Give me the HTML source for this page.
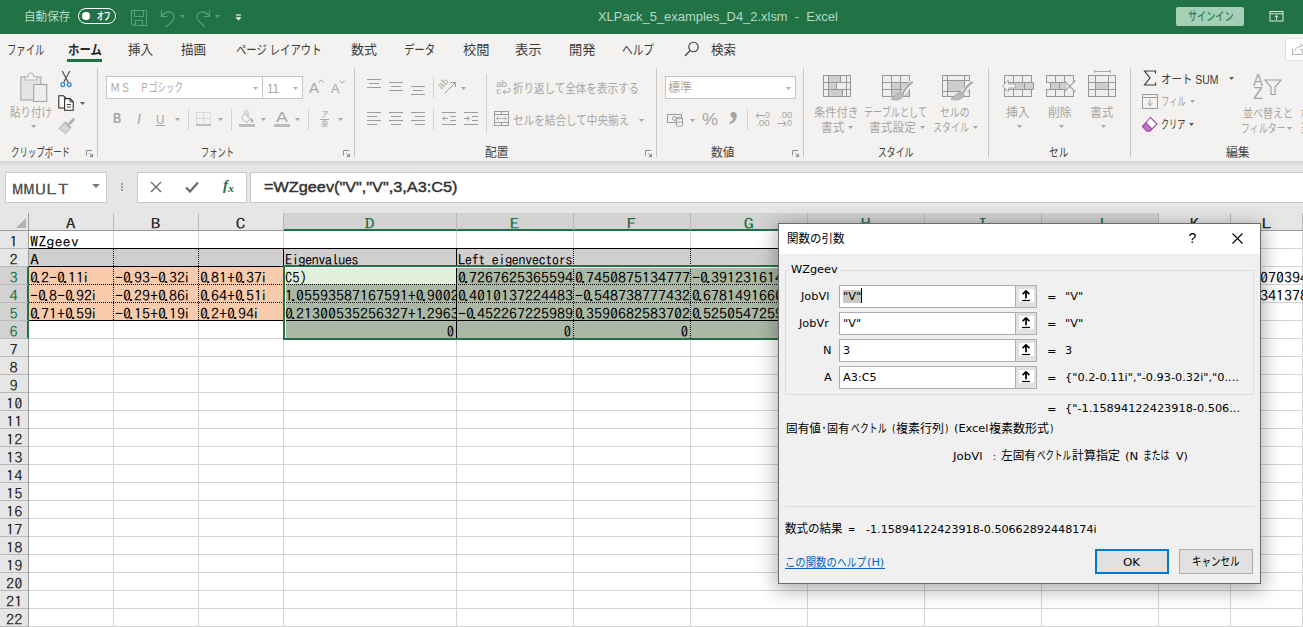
<!DOCTYPE html>
<html lang="ja">
<head>
<meta charset="utf-8">
<title>XLPack_5_examples_D4_2.xlsm - Excel</title>
<style>
*{box-sizing:border-box;margin:0;padding:0}
html,body{width:1303px;height:627px;overflow:hidden;background:#fff}
body{position:relative;font-family:"Liberation Sans","Noto Sans CJK JP",sans-serif;font-size:12px;color:#262626}
.abs{position:absolute}
.t{position:absolute;white-space:nowrap;line-height:1}
#title{left:0;top:0;width:1303px;height:33px;background:#217346;color:#fff}
#tabs{left:0;top:33px;width:1303px;height:32px;background:#f3f2f1}
#ribbon{left:0;top:65px;width:1303px;height:96px;background:#f3f2f1}
#fbar{left:0;top:161px;width:1303px;height:52px;background:#e6e6e6}
#fshadow{left:0;top:161px;width:1303px;height:6px;background:linear-gradient(#d3d3d3,#e6e6e6)}
#sheet{left:0;top:0;width:1303px;height:627px}
.cell,.ch,.rh{font-family:"IPAGothic","Noto Sans CJK JP",sans-serif;font-size:14.67px}
.ch{text-align:center}
.rh{left:0;width:28px;text-align:center}
.cell{color:#000}
.dl{font-family:"DejaVu Sans","Noto Sans CJK JP",sans-serif;font-size:11.3px;color:#000}
.dl .j,.j{font-size:12px;display:inline-block;transform-origin:0 50%}
.inp{position:absolute;left:60px;width:198px;height:23px;background:#fff;border:1px solid #abadb3;font-family:"DejaVu Sans",sans-serif;font-size:11.3px;color:#000;line-height:21px;padding-left:3px;white-space:nowrap}
.inp .sel{background:#c8c8c8}
.inp .caret{display:inline-block;width:1px;height:15px;background:#000;vertical-align:-3px}
.btn{width:74px;height:25px;background:#e1e1e1;text-align:center;font-size:12px;color:#000}
.btn span{position:absolute;left:0;right:0;line-height:1}
.inp i{position:absolute;right:0;top:0;width:21px;height:21px;background:#e1e1e1;border-left:1px solid #abadb3}
.inp i::before{content:"";position:absolute;left:3px;top:3px;width:15px;height:13px;background:#fff}
.inp i svg{position:absolute;left:5px;top:4px}
.cell .d{font-style:normal;margin:0 -2.3px}
.cell .d2{font-style:normal;margin:0 -2.2px 0 -2px}
</style>
</head>
<body>
<div id="title" class="abs" style="height:34px"></div>
<div class="t" style="left:23.5px;top:10.5px;font-size:12px;color:#b7d8c5;transform:scaleX(0.968);transform-origin:0 0;">自動保存</div>
<div class="abs" style="left:78px;top:8px;width:38px;height:16px;border:1.4px solid #fff;border-radius:8px"></div>
<div class="abs" style="left:82px;top:12.2px;width:7.6px;height:7.6px;border-radius:50%;background:#fff"></div>
<div class="t" style="left:96.5px;top:12.3px;font-size:10px;color:#fff;font-weight:bold;transform:scaleX(0.675);transform-origin:0 0;">オフ</div>
<svg class="abs" style="left:130px;top:9px" width="18" height="18" viewBox="0 0 18 18" fill="none" stroke="#5c9d78" stroke-width="1.1"><path d="M1.5 1.5H16.5V16.5H3.5L1.5 14.5Z"/><path d="M4.5 1.5V7.5H13.5V1.5"/><path d="M5.5 16.5V11.5H12.5V16.5"/></svg>
<svg class="abs" style="left:159px;top:8px" width="18" height="20" viewBox="0 0 18 20" fill="none" stroke="#5c9d78" stroke-width="1.2"><path d="M2.5 2.5V8.5H8.5"/><path d="M2.8 8.2C5 4.5 9 2.8 12.5 4.5C16 6.5 16 10.5 13 13.5L7 19"/></svg>
<svg class="abs" style="left:180px;top:15px" width="5" height="3"><path d="M0 0H5L2.5 3Z" fill="#5c9d78"/></svg>
<svg class="abs" style="left:194px;top:8px" width="18" height="20" viewBox="0 0 18 20" fill="none" stroke="#5c9d78" stroke-width="1.2"><path d="M15.5 2.5V8.5H9.5"/><path d="M15.2 8.2C13 4.5 9 2.8 5.5 4.5C2 6.5 2 10.5 5 13.5L11 19"/></svg>
<svg class="abs" style="left:215px;top:15px" width="5" height="3"><path d="M0 0H5L2.5 3Z" fill="#5c9d78"/></svg>
<svg class="abs" style="left:234.5px;top:13.5px" width="7" height="7"><path d="M1 1H6" stroke="#fff" stroke-width="1.1"/><path d="M0.5 3.2H6.5L3.5 6.5Z" fill="#fff"/></svg>
<div class="t" style="left:598.0px;top:10.0px;font-size:13px;color:#b7d8c5;transform:scaleX(0.994);transform-origin:0 0;white-space:pre;">XLPack_5_examples_D4_2.xlsm  -  Excel</div>
<div class="abs" style="left:1176px;top:7px;width:68px;height:19px;background:#a4d0b5;border-radius:2px"></div>
<div class="t" style="left:1187.5px;top:11.0px;font-size:12px;color:#35805a;font-weight:500;transform:scaleX(0.758);transform-origin:0 0;">サインイン</div>
<svg class="abs" style="left:1269px;top:10px" width="15" height="12" viewBox="0 0 15 12" fill="none" stroke="#dcebe2" stroke-width="1"><rect x="1" y="1.5" width="13" height="9.5"/><path d="M1 3.8H14"/><path d="M7.5 10V5.5M5.5 7.3L7.5 5.3L9.5 7.3"/></svg>
<div id="tabs" class="abs" style="top:34px;height:31px"></div>
<div class="t" style="left:7.0px;top:43.0px;font-size:13px;color:#3b3b3b;transform:scaleX(0.721);transform-origin:0 0;">ファイル</div>
<div class="t" style="left:67.5px;top:43.0px;font-size:13px;color:#262626;font-weight:bold;transform:scaleX(0.875);transform-origin:0 0;">ホーム</div>
<div class="abs" style="left:67px;top:59px;width:35px;height:3px;background:#217346"></div>
<div class="t" style="left:128.3px;top:43.0px;font-size:13px;color:#3b3b3b;transform:scaleX(0.969);transform-origin:0 0;">挿入</div>
<div class="t" style="left:181.1px;top:43.0px;font-size:13px;color:#3b3b3b;transform:scaleX(0.969);transform-origin:0 0;">描画</div>
<div class="t" style="left:235.8px;top:43.0px;font-size:13px;color:#3b3b3b;transform:scaleX(0.797);transform-origin:0 0;">ページ レイアウト</div>
<div class="t" style="left:351.0px;top:43.0px;font-size:13px;color:#3b3b3b;transform:scaleX(0.999);transform-origin:0 0;">数式</div>
<div class="t" style="left:404.0px;top:43.0px;font-size:13px;color:#3b3b3b;transform:scaleX(0.795);transform-origin:0 0;">データ</div>
<div class="t" style="left:462.5px;top:43.0px;font-size:13px;color:#3b3b3b;transform:scaleX(1.019);transform-origin:0 0;">校閲</div>
<div class="t" style="left:515.0px;top:43.0px;font-size:13px;color:#3b3b3b;transform:scaleX(1.019);transform-origin:0 0;">表示</div>
<div class="t" style="left:568.5px;top:43.0px;font-size:13px;color:#3b3b3b;transform:scaleX(1.019);transform-origin:0 0;">開発</div>
<div class="t" style="left:621.5px;top:43.0px;font-size:13px;color:#3b3b3b;transform:scaleX(0.820);transform-origin:0 0;">ヘルプ</div>
<svg class="abs" style="left:684px;top:41px" width="16" height="16" viewBox="0 0 16 16" fill="none" stroke="#3b3b3b" stroke-width="1.1"><circle cx="9.5" cy="6" r="4.7"/><path d="M6.2 9.5L1 15"/></svg>
<div class="t" style="left:711.0px;top:43.0px;font-size:13px;color:#3b3b3b;transform:scaleX(0.961);transform-origin:0 0;">検索</div>
<div class="abs" style="left:1285px;top:38px;width:30px;height:23px;background:#fff;border:1px solid #e1dfdd;border-radius:3px"></div>
<svg class="abs" style="left:1291px;top:43px" width="14" height="13" viewBox="0 0 14 13" fill="none" stroke="#b4b2b0" stroke-width="1"><path d="M1.5 4.5V11.5H11.5V8"/><path d="M4 8C4 5 7 3.5 10 3.5V1L13.5 4.5L10 8V5.5"/></svg><div id="ribbon" class="abs"></div>
<div class="abs" style="left:97px;top:68px;width:1px;height:89px;background:#c8c6c4"></div>
<div class="abs" style="left:354px;top:68px;width:1px;height:89px;background:#c8c6c4"></div>
<div class="abs" style="left:656px;top:68px;width:1px;height:89px;background:#c8c6c4"></div>
<div class="abs" style="left:803px;top:68px;width:1px;height:89px;background:#c8c6c4"></div>
<div class="abs" style="left:988px;top:68px;width:1px;height:89px;background:#c8c6c4"></div>
<div class="abs" style="left:1130px;top:68px;width:1px;height:89px;background:#c8c6c4"></div>
<svg class="abs" style="left:19px;top:71px" width="29" height="32" viewBox="0 0 29 32" fill="none" stroke="#b3b1af" stroke-width="1" ><rect x="1.8" y="6" width="20" height="23" fill="#e6e4e2" stroke="#bdbbb9" stroke-width="1.6"/><path d="M6 9V5.5H9.2C9.2 0.8 14.6 0.8 14.6 5.5H17.8V9Z" fill="#f3f2f1" stroke="#bdbbb9" stroke-width="1.2"/><rect x="14.7" y="13.5" width="13" height="17" fill="#efeeed" stroke="#a6a4a2" stroke-width="1.1"/></svg>
<div class="t" style="left:10.0px;top:107.0px;font-size:12px;color:#a7a5a3;transform:scaleX(0.875);transform-origin:0 0;">貼り付け</div>
<svg class="abs" style="left:31.0px;top:125.0px" width="5" height="3"><path d="M0 0H5L2.5 3Z" fill="#a7a5a3"/></svg>
<svg class="abs" style="left:60px;top:70px" width="12" height="18" viewBox="0 0 12 18" fill="none" stroke="#505050" stroke-width="1.1" ><path d="M2.2 1L8.3 12.5M9.8 1L3.7 12.5" stroke="#505050" stroke-width="1.2"/><circle cx="2.8" cy="14.6" r="1.9" stroke="#2b88d8" stroke-width="1.3"/><circle cx="9.2" cy="14.6" r="1.9" stroke="#2b88d8" stroke-width="1.3"/></svg>
<svg class="abs" style="left:58px;top:95px" width="17" height="16" viewBox="0 0 17 16" fill="none" stroke="#262626" stroke-width="1.05" ><path d="M0.8 0.8H5.5L7.5 2.8V13H0.8Z" fill="#fafafa"/><path d="M6.6 3.6H12L15.2 6.8V15.2H6.6Z" fill="#fff"/><path d="M12 3.6V6.8H15.2" stroke-width="0.9"/><path d="M8.8 9.5H13M8.8 12H13" stroke-width="0.9"/></svg>
<svg class="abs" style="left:80.0px;top:101.8px" width="5" height="3"><path d="M0 0H5L2.5 3Z" fill="#605e5c"/></svg>
<svg class="abs" style="left:58px;top:118px" width="17" height="16" viewBox="0 0 17 16" fill="none" stroke="#b3b1af" stroke-width="1" ><path d="M10.5 5.5L14.8 1.2C15.6 0.4 16.6 1.4 15.8 2.2L11.5 6.5" stroke-width="1.6" stroke="#b0aeac"/><path d="M7 3.8L13 9.8" stroke-width="1.6" stroke="#b0aeac"/><path d="M6.5 4.5L1 10.5L7.5 15.5L12.3 10.3Z" fill="#d9d7d5" stroke="#b0aeac"/></svg>
<div class="t" style="left:10.6px;top:147.0px;font-size:12px;color:#444;transform:scaleX(0.703);transform-origin:0 0;">クリップボード</div>
<svg class="abs" style="left:86px;top:150px" width="8" height="8" viewBox="0 0 8 8" fill="none" stroke="#8e8c8a" stroke-width="1" ><path d="M0.5 5.5V0.5H6"/><path d="M3.3 3.3L6 6" /><path d="M7 3.2V7H3.2Z" fill="#8e8c8a" stroke="none"/></svg>
<div class="abs" style="left:106px;top:76px;width:157px;height:23px;background:#fff;border:1px solid #c8c6c4"></div>
<div class="abs" style="left:263px;top:76px;width:40px;height:23px;background:#fff;border:1px solid #c8c6c4;border-left:none"></div>
<div class="t" style="left:110.4px;top:82.0px;font-size:12px;color:#a7a5a3;transform:scaleX(0.858);transform-origin:0 0;">ＭＳ</div>
<div class="t" style="left:140.0px;top:82.0px;font-size:12px;color:#a7a5a3;transform:scaleX(0.732);transform-origin:0 0;">Ｐ</div>
<div class="t" style="left:148.9px;top:82.0px;font-size:12px;color:#a7a5a3;transform:scaleX(0.710);transform-origin:0 0;">ゴシック</div>
<svg class="abs" style="left:253.0px;top:86.5px" width="5" height="3"><path d="M0 0H5L2.5 3Z" fill="#b5b3b1"/></svg>
<div class="t" style="left:266.5px;top:82.0px;font-size:13px;color:#a7a5a3;transform:scaleX(0.896);transform-origin:0 0;">11</div>
<svg class="abs" style="left:292.5px;top:86.5px" width="5" height="3"><path d="M0 0H5L2.5 3Z" fill="#b5b3b1"/></svg>
<div class="t" style="left:309.0px;top:79.5px;font-size:15px;color:#a7a5a3;transform:scaleX(0.998);transform-origin:0 0;">A</div>
<svg class="abs" style="left:318px;top:79px" width="6" height="4" viewBox="0 0 6 4" fill="none" stroke="#a7a5a3" stroke-width="1" ><path d="M0.5 3.5L3 0.8L5.5 3.5"/></svg>
<div class="t" style="left:331.0px;top:81.5px;font-size:13px;color:#a7a5a3;transform:scaleX(0.980);transform-origin:0 0;">A</div>
<svg class="abs" style="left:339px;top:80px" width="6" height="4" viewBox="0 0 6 4" fill="none" stroke="#a7a5a3" stroke-width="1" ><path d="M0.5 0.5L3 3.2L5.5 0.5"/></svg>
<div class="t" style="left:113.2px;top:111.0px;font-size:14.5px;color:#a7a5a3;font-weight:bold;transform:scaleX(0.792);transform-origin:0 0;">B</div>
<div class="t" style="left:137.0px;top:111.5px;font-size:14px;color:#a7a5a3;transform:scaleX(1.028);transform-origin:0 0;font-style:italic;">I</div>
<div class="t" style="left:156.0px;top:112.5px;font-size:13.5px;color:#a7a5a3;transform:scaleX(0.872);transform-origin:0 0;">U</div>
<div class="abs" style="left:155.5px;top:124.5px;width:9.5px;height:1px;background:#a7a5a3"></div>
<svg class="abs" style="left:174.8px;top:118.0px" width="5" height="3"><path d="M0 0H5L2.5 3Z" fill="#a7a5a3"/></svg>
<div class="abs" style="left:188px;top:109px;width:1px;height:21px;background:#d2d0ce"></div>
<svg class="abs" style="left:196px;top:112px" width="15" height="14" viewBox="0 0 15 14" fill="none" stroke="#b3b1af" stroke-width="1" ><path d="M0.5 0.5H14.5M0.5 0.5V12M14.5 0.5V12M7.5 0.5V12M0.5 6.5H14.5" stroke-dasharray="1 1" stroke="#c4c2c0"/><path d="M0 13H15" stroke-width="1.6"/></svg>
<svg class="abs" style="left:217.9px;top:118.0px" width="5" height="3"><path d="M0 0H5L2.5 3Z" fill="#a7a5a3"/></svg>
<div class="abs" style="left:231px;top:109px;width:1px;height:21px;background:#d2d0ce"></div>
<svg class="abs" style="left:239px;top:110px" width="16" height="13" viewBox="0 0 16 13" fill="none" stroke="#b3b1af" stroke-width="1" ><path d="M6 3.5L11.5 9L7 12.5L2.5 8Z"/><path d="M6 3.5V1.5C6 0 9 0 9 1.5V6"/><path d="M12.5 8.5C13.5 10 14.5 11 13.5 12C12.5 12.8 11.5 11.5 12.5 8.5Z" fill="#b3b1af"/></svg>
<div class="abs" style="left:239px;top:123.5px;width:16px;height:3.5px;background:#bdbbb9"></div>
<svg class="abs" style="left:260.9px;top:118.0px" width="5" height="3"><path d="M0 0H5L2.5 3Z" fill="#a7a5a3"/></svg>
<div class="t" style="left:275.8px;top:108.9px;font-size:15px;color:#a7a5a3;transform:scaleX(1.178);transform-origin:0 0;">A</div>
<div class="abs" style="left:273.5px;top:123.5px;width:16px;height:3.5px;background:#bdbbb9"></div>
<svg class="abs" style="left:295.1px;top:118.0px" width="5" height="3"><path d="M0 0H5L2.5 3Z" fill="#a7a5a3"/></svg>
<div class="abs" style="left:308px;top:109px;width:1px;height:21px;background:#d2d0ce"></div>
<div class="t" style="left:320.5px;top:110.5px;font-size:8px;color:#a7a5a3;transform:scaleX(0.938);transform-origin:0 0;">ア</div>
<div class="t" style="left:320.5px;top:120.0px;font-size:8px;color:#a7a5a3;transform:scaleX(0.938);transform-origin:0 0;">亜</div>
<div class="abs" style="left:320px;top:118.7px;width:8.5px;height:1px;background:#a7a5a3"></div>
<svg class="abs" style="left:337.9px;top:118.0px" width="5" height="3"><path d="M0 0H5L2.5 3Z" fill="#a7a5a3"/></svg>
<div class="t" style="left:201.4px;top:147.0px;font-size:12px;color:#444;transform:scaleX(0.685);transform-origin:0 0;">フォント</div>
<svg class="abs" style="left:343px;top:150px" width="8" height="8" viewBox="0 0 8 8" fill="none" stroke="#8e8c8a" stroke-width="1" ><path d="M0.5 5.5V0.5H6"/><path d="M3.3 3.3L6 6" /><path d="M7 3.2V7H3.2Z" fill="#8e8c8a" stroke="none"/></svg>
<svg class="abs" style="left:367px;top:79px" width="14" height="9" viewBox="0 0 14 9" fill="none" stroke="#9f9d9b" stroke-width="1" ><path d="M0 0.5H14"/><path d="M2 4.5H12"/><path d="M0 8.5H14"/></svg>
<svg class="abs" style="left:389px;top:82px" width="14" height="9" viewBox="0 0 14 9" fill="none" stroke="#9f9d9b" stroke-width="1" ><path d="M0 0.5H14"/><path d="M2 4.5H12"/><path d="M0 8.5H14"/></svg>
<svg class="abs" style="left:411px;top:86px" width="14" height="9" viewBox="0 0 14 9" fill="none" stroke="#9f9d9b" stroke-width="1" ><path d="M0 0.5H14"/><path d="M2 4.5H12"/><path d="M0 8.5H14"/></svg>
<div class="abs" style="left:433px;top:77px;width:1px;height:21px;background:#d2d0ce"></div>
<svg class="abs" style="left:438px;top:76px" width="22" height="20" viewBox="0 0 22 20" fill="none" stroke="#9f9d9b" stroke-width="1" ><path d="M6.5 17.5L17.5 6.5M17.5 6.5H13M17.5 6.5V11"/><text x="1.5" y="11.5" font-size="9.5" fill="#a7a5a3" stroke="none" font-family="Liberation Sans" transform="rotate(-45 5 10)">ab</text></svg>
<svg class="abs" style="left:461.0px;top:86.5px" width="5" height="3"><path d="M0 0H5L2.5 3Z" fill="#a7a5a3"/></svg>
<svg class="abs" style="left:367px;top:112px" width="14" height="13" viewBox="0 0 14 13" fill="none" stroke="#9f9d9b" stroke-width="1" ><path d="M0 0.5H14"/><path d="M0 4.5H10"/><path d="M0 8.5H14"/><path d="M0 12.5H10"/></svg>
<svg class="abs" style="left:389px;top:112px" width="14" height="13" viewBox="0 0 14 13" fill="none" stroke="#9f9d9b" stroke-width="1" ><path d="M0 0.5H14"/><path d="M2 4.5H12"/><path d="M0 8.5H14"/><path d="M2 12.5H12"/></svg>
<svg class="abs" style="left:411px;top:112px" width="14" height="13" viewBox="0 0 14 13" fill="none" stroke="#9f9d9b" stroke-width="1" ><path d="M0 0.5H14"/><path d="M4 4.5H14"/><path d="M0 8.5H14"/><path d="M4 12.5H14"/></svg>
<div class="abs" style="left:433px;top:108px;width:1px;height:22px;background:#d2d0ce"></div>
<svg class="abs" style="left:442px;top:112px" width="14" height="13" viewBox="0 0 14 13" fill="none" stroke="#9f9d9b" stroke-width="1" ><path d="M0 0.5H14M8 4.5H14M8 8.5H14M0 12.5H14"/><path d="M6 6.5H0.8M3 4.3L0.8 6.5L3 8.7"/></svg>
<svg class="abs" style="left:464px;top:112px" width="14" height="13" viewBox="0 0 14 13" fill="none" stroke="#9f9d9b" stroke-width="1" ><path d="M0 0.5H14M8 4.5H14M8 8.5H14M0 12.5H14"/><path d="M0 6.5H5.2M3 4.3L5.2 6.5L3 8.7"/></svg>
<div class="abs" style="left:486px;top:74px;width:1px;height:59px;background:#d2d0ce"></div>
<svg class="abs" style="left:496px;top:79px" width="16" height="17" viewBox="0 0 16 17" fill="none" stroke="#9f9d9b" stroke-width="1" ><text x="0.3" y="7.5" font-size="9.5" fill="#a7a5a3" stroke="none" font-family="Liberation Sans">ab</text><text x="0.3" y="15" font-size="9.5" fill="#a7a5a3" stroke="none" font-family="Liberation Sans">c</text><path d="M12.5 9.5C15 9.5 15 13 12.5 13H7M9 11L7 13L9 15"/></svg>
<div class="t" style="left:513.0px;top:82.5px;font-size:12px;color:#a7a5a3;transform:scaleX(0.877);transform-origin:0 0;">折り返して全体を表示する</div>
<svg class="abs" style="left:494px;top:111px" width="16" height="15" viewBox="0 0 16 15" fill="none" stroke="#9f9d9b" stroke-width="1" ><rect x="0.5" y="0.5" width="14" height="14"/><path d="M0.5 3.5H14.5M0.5 11.5H14.5M7.5 0.5V3.5M7.5 11.5V14.5"/><path d="M2.5 7.5H12.5M4.5 5.5L2.5 7.5L4.5 9.5M10.5 5.5L12.5 7.5L10.5 9.5" stroke="#b5b3b1"/></svg>
<div class="t" style="left:513.0px;top:114.5px;font-size:12px;color:#a7a5a3;transform:scaleX(0.883);transform-origin:0 0;">セルを結合して中央揃え</div>
<svg class="abs" style="left:639.0px;top:119.0px" width="5" height="3"><path d="M0 0H5L2.5 3Z" fill="#a7a5a3"/></svg>
<div class="t" style="left:485.0px;top:147.0px;font-size:12px;color:#444;transform:scaleX(0.974);transform-origin:0 0;">配置</div>
<svg class="abs" style="left:645px;top:150px" width="8" height="8" viewBox="0 0 8 8" fill="none" stroke="#8e8c8a" stroke-width="1" ><path d="M0.5 5.5V0.5H6"/><path d="M3.3 3.3L6 6" /><path d="M7 3.2V7H3.2Z" fill="#8e8c8a" stroke="none"/></svg>
<div class="abs" style="left:665px;top:76px;width:131px;height:23px;background:#fff;border:1px solid #c8c6c4"></div>
<div class="t" style="left:667.7px;top:82.0px;font-size:12px;color:#a7a5a3;transform:scaleX(1.004);transform-origin:0 0;">標準</div>
<svg class="abs" style="left:785.8px;top:86.5px" width="5" height="3"><path d="M0 0H5L2.5 3Z" fill="#b5b3b1"/></svg>
<svg class="abs" style="left:667px;top:113px" width="17" height="14" viewBox="0 0 17 14" fill="none" stroke="#9d9b99" stroke-width="1" ><rect x="0.5" y="1.5" width="14" height="8"/><circle cx="7.5" cy="5.5" r="2"/><path d="M9.5 5V12.5C9.5 13.5 15.5 13.5 15.5 12.5V5M9.5 5C9.5 4 15.5 4 15.5 5C15.5 6 9.5 6 9.5 5M9.5 8.5C9.5 9.5 15.5 9.5 15.5 8.5" fill="#f3f2f1"/></svg>
<svg class="abs" style="left:689.8px;top:118.5px" width="5" height="3"><path d="M0 0H5L2.5 3Z" fill="#a7a5a3"/></svg>
<div class="t" style="left:702.0px;top:111.0px;font-size:17px;color:#a7a5a3;transform:scaleX(1.058);transform-origin:0 0;">%</div>
<div class="t" style="left:729.0px;top:85.3px;font-size:40px;color:#a7a5a3;font-weight:bold;font-family:'Liberation Serif',serif;transform:scaleX(0.900);transform-origin:0 0;">,</div>
<div class="abs" style="left:747px;top:109px;width:1px;height:21px;background:#d2d0ce"></div>
<div class="t" style="left:763.2px;top:110.0px;font-size:9.5px;color:#a7a5a3;transform:scaleX(0.857);transform-origin:0 0;">.0</div>
<div class="t" style="left:756.2px;top:118.0px;font-size:9.5px;color:#a7a5a3;transform:scaleX(1.044);transform-origin:0 0;">.00</div>
<svg class="abs" style="left:754.5px;top:112px" width="10" height="7" viewBox="0 0 10 7" fill="none" stroke="#a3a19f" stroke-width="1" ><path d="M9.5 3.5H1M3.8 0.8L1 3.5L3.8 6.2"/></svg>
<div class="t" style="left:778.8px;top:110.0px;font-size:9.5px;color:#a7a5a3;transform:scaleX(0.999);transform-origin:0 0;">.00</div>
<div class="t" style="left:785.0px;top:118.0px;font-size:9.5px;color:#a7a5a3;transform:scaleX(0.882);transform-origin:0 0;">.0</div>
<svg class="abs" style="left:776.5px;top:120px" width="10" height="7" viewBox="0 0 10 7" fill="none" stroke="#a3a19f" stroke-width="1" ><path d="M0.5 3.5H9M6.2 0.8L9 3.5L6.2 6.2"/></svg>
<div class="t" style="left:710.5px;top:147.0px;font-size:12px;color:#444;transform:scaleX(0.979);transform-origin:0 0;">数値</div>
<svg class="abs" style="left:792px;top:150px" width="8" height="8" viewBox="0 0 8 8" fill="none" stroke="#8e8c8a" stroke-width="1" ><path d="M0.5 5.5V0.5H6"/><path d="M3.3 3.3L6 6" /><path d="M7 3.2V7H3.2Z" fill="#8e8c8a" stroke="none"/></svg>
<svg class="abs" style="left:823px;top:75px" width="29" height="23" viewBox="0 0 29 23" fill="none" stroke="#999795" stroke-width="1" ><rect x="0.5" y="0.5" width="27" height="21" fill="#efeeed"/><rect x="5.5" y="0.5" width="12" height="7" fill="#cfcdcb"/><rect x="5.5" y="7.5" width="8" height="7" fill="#cfcdcb"/><rect x="5.5" y="14.5" width="14" height="7" fill="#cfcdcb"/><path d="M0.5 7.5H27.5M0.5 14.5H27.5M5.5 0.5V21.5M23.5 0.5V21.5M17.5 0.5V7.5M13.5 7.5V14.5M19.5 14.5V21.5"/></svg>
<div class="t" style="left:814.0px;top:107.0px;font-size:12px;color:#a7a5a3;transform:scaleX(0.933);transform-origin:0 0;">条件付き</div>
<div class="t" style="left:821.0px;top:121.5px;font-size:12px;color:#a7a5a3;transform:scaleX(0.974);transform-origin:0 0;">書式</div>
<svg class="abs" style="left:847.9px;top:126.0px" width="5" height="3"><path d="M0 0H5L2.5 3Z" fill="#a7a5a3"/></svg>
<svg class="abs" style="left:882px;top:75px" width="32" height="27" viewBox="0 0 32 27" fill="none" stroke="#999795" stroke-width="1" ><rect x="0.5" y="0.5" width="27" height="21" fill="#efeeed"/><rect x="9.5" y="7.5" width="18" height="14" fill="#cfcdcb"/><path d="M0.5 7.5H27.5M0.5 14.5H27.5M9.5 0.5V21.5M18.5 0.5V21.5"/><path d="M30 7.3L20.5 18.5" stroke="#f3f2f1" stroke-width="5" fill="none"/><path d="M30 7.3C27.5 9 23.5 13 20.5 18.5" stroke="#a9a7a5" stroke-width="2.2" fill="none" stroke-linecap="round"/><path d="M19 17.5C15.5 17.5 13.5 20 9 24C14.5 26.5 20.5 24 22 20.5Z" fill="#bbb9b7" stroke="#a9a7a5" stroke-width="0.9"/></svg>
<div class="t" style="left:864.0px;top:107.0px;font-size:12px;color:#a7a5a3;transform:scaleX(0.760);transform-origin:0 0;">テーブルとして</div>
<div class="t" style="left:868.7px;top:121.5px;font-size:12px;color:#a7a5a3;transform:scaleX(0.979);transform-origin:0 0;">書式設定</div>
<svg class="abs" style="left:920.2px;top:126.0px" width="5" height="3"><path d="M0 0H5L2.5 3Z" fill="#a7a5a3"/></svg>
<svg class="abs" style="left:942px;top:75px" width="32" height="27" viewBox="0 0 32 27" fill="none" stroke="#999795" stroke-width="1" ><rect x="0.5" y="0.5" width="27" height="21" fill="#efeeed"/><rect x="5.5" y="5.5" width="17" height="11" fill="#cfcdcb"/><path d="M0.5 5.5H27.5M0.5 16.5H27.5M5.5 0.5V21.5M22.5 0.5V21.5"/><path d="M30 7.3L20.5 18.5" stroke="#f3f2f1" stroke-width="5" fill="none"/><path d="M30 7.3C27.5 9 23.5 13 20.5 18.5" stroke="#a9a7a5" stroke-width="2.2" fill="none" stroke-linecap="round"/><path d="M19 17.5C15.5 17.5 13.5 20 9 24C14.5 26.5 20.5 24 22 20.5Z" fill="#bbb9b7" stroke="#a9a7a5" stroke-width="0.9"/></svg>
<div class="t" style="left:940.2px;top:107.0px;font-size:12px;color:#a7a5a3;transform:scaleX(0.819);transform-origin:0 0;">セルの</div>
<div class="t" style="left:933.1px;top:121.5px;font-size:12px;color:#a7a5a3;transform:scaleX(0.748);transform-origin:0 0;">スタイル</div>
<svg class="abs" style="left:973.2px;top:126.0px" width="5" height="3"><path d="M0 0H5L2.5 3Z" fill="#a7a5a3"/></svg>
<div class="t" style="left:878.3px;top:147.0px;font-size:12px;color:#444;transform:scaleX(0.735);transform-origin:0 0;">スタイル</div>
<svg class="abs" style="left:1001px;top:70px" width="36" height="28" viewBox="0 0 36 28" fill="none" stroke="#999795" stroke-width="1" ><rect x="3.5" y="5.5" width="27" height="21" fill="#efeeed"/><path d="M12.5 5.5V26.5M21.5 5.5V26.5M3.5 12.5H30.5M3.5 19.5H30.5"/><rect x="14.5" y="12.5" width="18" height="7" fill="#cfcdcb" stroke="none"/><path d="M14.5 12.5H32.5V19.5H14.5M23.5 12.5V19.5"/><path d="M1.5 16L7.5 10V14H14.5V18H7.5V22Z" fill="#f3f2f1" stroke="#b0aeac"/></svg>
<div class="t" style="left:1006.0px;top:107.0px;font-size:12px;color:#a7a5a3;transform:scaleX(0.983);transform-origin:0 0;">挿入</div>
<svg class="abs" style="left:1016.7px;top:125.0px" width="5" height="3"><path d="M0 0H5L2.5 3Z" fill="#a7a5a3"/></svg>
<svg class="abs" style="left:1043px;top:70px" width="36" height="28" viewBox="0 0 36 28" fill="none" stroke="#999795" stroke-width="1" ><rect x="3.5" y="5.5" width="27" height="21" fill="#efeeed"/><path d="M12.5 5.5V26.5M21.5 5.5V26.5M3.5 12.5H30.5M3.5 19.5H30.5"/><rect x="3" y="12.5" width="4.5" height="7" fill="#f3f2f1" stroke="none"/><rect x="21.5" y="12" width="10" height="8" fill="#f3f2f1" stroke="none"/><rect x="7.5" y="12.5" width="16" height="7" fill="#cfcdcb" stroke="none"/><path d="M7.5 12.5V19.5M16.5 12.5V19.5M3.5 12.5H23M3.5 19.5H23"/><path d="M21 10.5L32.5 22M32.5 10.5L21 22" stroke="#a9a7a5" stroke-width="1.2"/></svg>
<div class="t" style="left:1048.2px;top:107.0px;font-size:12px;color:#a7a5a3;transform:scaleX(0.979);transform-origin:0 0;">削除</div>
<svg class="abs" style="left:1058.8px;top:125.0px" width="5" height="3"><path d="M0 0H5L2.5 3Z" fill="#a7a5a3"/></svg>
<svg class="abs" style="left:1085px;top:70px" width="36" height="28" viewBox="0 0 36 28" fill="none" stroke="#999795" stroke-width="1" ><path d="M9.5 1.5H25.5M9.5 0V3M25.5 0V3" stroke="#a9a7a5"/><rect x="3.5" y="5.5" width="27" height="21" fill="#efeeed"/><rect x="10.5" y="12.5" width="13" height="7" fill="#cfcdcb" stroke="none"/><path d="M10.5 5.5V26.5M23.5 5.5V26.5M3.5 12.5H30.5M3.5 19.5H30.5"/></svg>
<div class="t" style="left:1090.3px;top:107.0px;font-size:12px;color:#a7a5a3;transform:scaleX(0.983);transform-origin:0 0;">書式</div>
<svg class="abs" style="left:1100.9px;top:125.0px" width="5" height="3"><path d="M0 0H5L2.5 3Z" fill="#a7a5a3"/></svg>
<div class="t" style="left:1049.4px;top:147.0px;font-size:12px;color:#444;transform:scaleX(0.804);transform-origin:0 0;">セル</div>
<svg class="abs" style="left:1143px;top:70px" width="14" height="16" viewBox="0 0 14 16" fill="none" stroke="#3b3b3b" stroke-width="1.2" ><path d="M12.5 3.5V1H1.5L7 8L1.5 15H12.5V12.5"/></svg>
<div class="t" style="left:1161.0px;top:73.5px;font-size:12px;color:#3b3b3b;transform:scaleX(0.871);transform-origin:0 0;">オート SUM</div>
<svg class="abs" style="left:1229.1px;top:77.0px" width="5" height="3"><path d="M0 0H5L2.5 3Z" fill="#605e5c"/></svg>
<svg class="abs" style="left:1142px;top:94px" width="16" height="15" viewBox="0 0 16 15" fill="none" stroke="#9d9b99" stroke-width="1" ><rect x="0.5" y="0.5" width="15" height="14"/><path d="M0.5 3.5H15.5"/><path d="M8 5.5V11.5M5.5 9L8 11.5L10.5 9"/></svg>
<div class="t" style="left:1161.0px;top:95.5px;font-size:12px;color:#a7a5a3;transform:scaleX(0.693);transform-origin:0 0;">フィル</div>
<svg class="abs" style="left:1190.2px;top:99.5px" width="5" height="3"><path d="M0 0H5L2.5 3Z" fill="#a7a5a3"/></svg>
<svg class="abs" style="left:1141px;top:116px" width="18" height="16" viewBox="0 0 18 16" fill="none" stroke="#a349a4" stroke-width="1.1" ><path d="M9.5 1.5L16 8L9 15H6L1.5 10.5Z" fill="#fff" stroke="#a349a4"/><path d="M1.5 10.5L5 7L11 13L9 15H6Z" fill="#c774c8" stroke="#a349a4"/></svg>
<div class="t" style="left:1161.0px;top:118.5px;font-size:12px;color:#3b3b3b;transform:scaleX(0.675);transform-origin:0 0;">クリア</div>
<svg class="abs" style="left:1188.7px;top:122.5px" width="5" height="3"><path d="M0 0H5L2.5 3Z" fill="#605e5c"/></svg>
<div class="t" style="left:1252.5px;top:72.6px;font-size:16px;color:#a7a5a3;transform:scaleX(0.937);transform-origin:0 0;">A</div>
<div class="t" style="left:1252.5px;top:85.7px;font-size:16px;color:#a7a5a3;transform:scaleX(1.022);transform-origin:0 0;">Z</div>
<svg class="abs" style="left:1264px;top:78.5px" width="18" height="18" viewBox="0 0 18 18" fill="none" stroke="#9d9b99" stroke-width="1.1" ><path d="M1 1H17L11 8V15.5H7V8Z"/></svg>
<div class="t" style="left:1242.8px;top:107.5px;font-size:12px;color:#a7a5a3;transform:scaleX(0.833);transform-origin:0 0;">並べ替えと</div>
<div class="t" style="left:1240.8px;top:122.5px;font-size:12px;color:#a7a5a3;transform:scaleX(0.746);transform-origin:0 0;">フィルター</div>
<svg class="abs" style="left:1287.4px;top:126.5px" width="5" height="3"><path d="M0 0H5L2.5 3Z" fill="#a7a5a3"/></svg>
<div class="t" style="left:1301.3px;top:107.5px;font-size:12px;color:#a7a5a3;transform:scaleX(0.974);transform-origin:0 0;">検</div>
<div class="t" style="left:1301.3px;top:122.5px;font-size:12px;color:#a7a5a3;transform:scaleX(0.974);transform-origin:0 0;">選</div>
<div class="t" style="left:1226.0px;top:147.0px;font-size:12px;color:#444;transform:scaleX(0.987);transform-origin:0 0;">編集</div><div id="fbar" class="abs"></div>
<div id="fshadow" class="abs"></div>
<div class="abs" style="left:5px;top:172px;width:102px;height:31px;background:#fff;border:1px solid #c8c8c8"></div>
<div class="abs" style="left:137px;top:172px;width:110px;height:31px;background:#fff;border:1px solid #c8c8c8"></div>
<div class="abs" style="left:250px;top:172px;width:1060px;height:31px;background:#fff;border:1px solid #c8c8c8"></div>
<div class="t" style="left:12.2px;top:182.0px;font-size:15px;color:#555;font-family:'IPAGothic','Noto Sans CJK JP',sans-serif;transform:scaleX(1.515);transform-origin:0 0;">MMULT</div>
<svg class="abs" style="left:92px;top:184px" width="8" height="4"><path d="M0 0H8L4 4Z" fill="#777"/></svg>
<div class="abs" style="left:121px;top:183px;width:1.5px;height:1.5px;background:#a0a0a0"></div>
<div class="abs" style="left:121px;top:186px;width:1.5px;height:1.5px;background:#a0a0a0"></div>
<div class="abs" style="left:121px;top:189px;width:1.5px;height:1.5px;background:#a0a0a0"></div>
<svg class="abs" style="left:150px;top:181px" width="12" height="12" viewBox="0 0 12 12"><path d="M1 1L11 11M11 1L1 11" stroke="#6a6a6a" stroke-width="1.4" fill="none"/></svg>
<svg class="abs" style="left:185px;top:181px" width="14" height="12" viewBox="0 0 14 12"><path d="M1 6.5L5 10.5L13 1.5" stroke="#6a6a6a" stroke-width="2.2" fill="none"/></svg>
<div class="t" style="left:223.0px;top:178.0px;font-size:15px;color:#217346;font-weight:bold;font-family:'Liberation Serif',serif;transform:scaleX(1.000);transform-origin:0 0;font-style:italic;">f</div>
<div class="t" style="left:227.5px;top:184.0px;font-size:10px;color:#217346;font-weight:bold;font-family:'Liberation Serif',serif;transform:scaleX(1.200);transform-origin:0 0;font-style:italic;">x</div>
<div class="t" style="left:264.2px;top:179.0px;font-size:15.5px;color:#333;font-family:'Liberation Sans','IPAGothic',sans-serif;transform:scaleX(1.049);transform-origin:0 0;-webkit-text-stroke:0.45px #333;">=WZgeev("V","V",3,A3:C5)</div><div id="sheet" class="abs">
<div class="abs" style="left:0;top:213px;width:1303px;height:17px;background:#e6e6e6"></div>
<div class="abs" style="left:0;top:230px;width:1303px;height:1px;background:#9b9b9b"></div>
<div class="abs" style="left:0;top:231px;width:28px;height:396px;background:#e6e6e6"></div>
<div class="abs" style="left:28px;top:213px;width:1px;height:414px;background:#9b9b9b"></div>
<div class="abs" style="left:284px;top:213px;width:875px;height:16px;background:#d2d2d2"></div>
<div class="abs" style="left:284px;top:229px;width:875px;height:2px;background:#217346"></div>
<div class="abs" style="left:0;top:267px;width:27px;height:72px;background:#d2d2d2"></div>
<div class="abs" style="left:27px;top:266px;width:2px;height:73px;background:#217346"></div>
<svg class="abs" style="left:16px;top:218px" width="10" height="10"><path d="M10 0V10H0Z" fill="#b2b2b2"/></svg>
<div class="abs" style="left:113px;top:213px;width:1px;height:17px;background:#b9b9b9"></div>
<div class="t ch" style="left:29px;width:84px;top:217px;color:#262626"><span style="display:inline-block;transform:scaleX(1.4)">A</span></div>
<div class="abs" style="left:198px;top:213px;width:1px;height:17px;background:#b9b9b9"></div>
<div class="t ch" style="left:114px;width:84px;top:217px;color:#262626"><span style="display:inline-block;transform:scaleX(1.4)">B</span></div>
<div class="abs" style="left:283px;top:213px;width:1px;height:17px;background:#b9b9b9"></div>
<div class="t ch" style="left:199px;width:84px;top:217px;color:#262626"><span style="display:inline-block;transform:scaleX(1.4)">C</span></div>
<div class="abs" style="left:456px;top:213px;width:1px;height:17px;background:#b9b9b9"></div>
<div class="t ch" style="left:284px;width:172px;top:217px;color:#217346"><span style="display:inline-block;transform:scaleX(1.4)">D</span></div>
<div class="abs" style="left:573px;top:213px;width:1px;height:17px;background:#b9b9b9"></div>
<div class="t ch" style="left:457px;width:116px;top:217px;color:#217346"><span style="display:inline-block;transform:scaleX(1.4)">E</span></div>
<div class="abs" style="left:690px;top:213px;width:1px;height:17px;background:#b9b9b9"></div>
<div class="t ch" style="left:574px;width:116px;top:217px;color:#217346"><span style="display:inline-block;transform:scaleX(1.4)">F</span></div>
<div class="abs" style="left:807px;top:213px;width:1px;height:17px;background:#b9b9b9"></div>
<div class="t ch" style="left:691px;width:116px;top:217px;color:#217346"><span style="display:inline-block;transform:scaleX(1.4)">G</span></div>
<div class="abs" style="left:924px;top:213px;width:1px;height:17px;background:#b9b9b9"></div>
<div class="t ch" style="left:808px;width:116px;top:217px;color:#217346"><span style="display:inline-block;transform:scaleX(1.4)">H</span></div>
<div class="abs" style="left:1041px;top:213px;width:1px;height:17px;background:#b9b9b9"></div>
<div class="t ch" style="left:925px;width:116px;top:217px;color:#217346"><span style="display:inline-block;transform:scaleX(1.4)">I</span></div>
<div class="abs" style="left:1158px;top:213px;width:1px;height:17px;background:#b9b9b9"></div>
<div class="t ch" style="left:1042px;width:116px;top:217px;color:#217346"><span style="display:inline-block;transform:scaleX(1.4)">J</span></div>
<div class="abs" style="left:1230px;top:213px;width:1px;height:17px;background:#b9b9b9"></div>
<div class="t ch" style="left:1159px;width:71px;top:217px;color:#262626"><span style="display:inline-block;transform:scaleX(1.4)">K</span></div>
<div class="abs" style="left:1302px;top:213px;width:1px;height:17px;background:#b9b9b9"></div>
<div class="t ch" style="left:1231px;width:71px;top:217px;color:#262626"><span style="display:inline-block;transform:scaleX(1.4)">L</span></div>
<div class="abs" style="left:0;top:248px;width:28px;height:1px;background:#b9b9b9"></div>
<div class="abs" style="left:29px;top:248px;width:1274px;height:1px;background:#d4d4d4"></div>
<div class="t rh" style="top:235px;color:#262626"><span style="display:inline-block;transform:scaleX(1.12)">1</span></div>
<div class="abs" style="left:0;top:266px;width:28px;height:1px;background:#b9b9b9"></div>
<div class="abs" style="left:29px;top:266px;width:1274px;height:1px;background:#d4d4d4"></div>
<div class="t rh" style="top:253px;color:#262626"><span style="display:inline-block;transform:scaleX(1.12)">2</span></div>
<div class="abs" style="left:0;top:284px;width:28px;height:1px;background:#b9b9b9"></div>
<div class="abs" style="left:29px;top:284px;width:1274px;height:1px;background:#d4d4d4"></div>
<div class="t rh" style="top:271px;color:#217346"><span style="display:inline-block;transform:scaleX(1.12)">3</span></div>
<div class="abs" style="left:0;top:302px;width:28px;height:1px;background:#b9b9b9"></div>
<div class="abs" style="left:29px;top:302px;width:1274px;height:1px;background:#d4d4d4"></div>
<div class="t rh" style="top:289px;color:#217346"><span style="display:inline-block;transform:scaleX(1.12)">4</span></div>
<div class="abs" style="left:0;top:320px;width:28px;height:1px;background:#b9b9b9"></div>
<div class="abs" style="left:29px;top:320px;width:1274px;height:1px;background:#d4d4d4"></div>
<div class="t rh" style="top:307px;color:#217346"><span style="display:inline-block;transform:scaleX(1.12)">5</span></div>
<div class="abs" style="left:0;top:338px;width:28px;height:1px;background:#b9b9b9"></div>
<div class="abs" style="left:29px;top:338px;width:1274px;height:1px;background:#d4d4d4"></div>
<div class="t rh" style="top:325px;color:#217346"><span style="display:inline-block;transform:scaleX(1.12)">6</span></div>
<div class="abs" style="left:0;top:356px;width:28px;height:1px;background:#b9b9b9"></div>
<div class="abs" style="left:29px;top:356px;width:1274px;height:1px;background:#d4d4d4"></div>
<div class="t rh" style="top:343px;color:#262626"><span style="display:inline-block;transform:scaleX(1.12)">7</span></div>
<div class="abs" style="left:0;top:374px;width:28px;height:1px;background:#b9b9b9"></div>
<div class="abs" style="left:29px;top:374px;width:1274px;height:1px;background:#d4d4d4"></div>
<div class="t rh" style="top:361px;color:#262626"><span style="display:inline-block;transform:scaleX(1.12)">8</span></div>
<div class="abs" style="left:0;top:392px;width:28px;height:1px;background:#b9b9b9"></div>
<div class="abs" style="left:29px;top:392px;width:1274px;height:1px;background:#d4d4d4"></div>
<div class="t rh" style="top:379px;color:#262626"><span style="display:inline-block;transform:scaleX(1.12)">9</span></div>
<div class="abs" style="left:0;top:410px;width:28px;height:1px;background:#b9b9b9"></div>
<div class="abs" style="left:29px;top:410px;width:1274px;height:1px;background:#d4d4d4"></div>
<div class="t rh" style="top:397px;color:#262626"><span style="display:inline-block;transform:scaleX(1.12)">10</span></div>
<div class="abs" style="left:0;top:428px;width:28px;height:1px;background:#b9b9b9"></div>
<div class="abs" style="left:29px;top:428px;width:1274px;height:1px;background:#d4d4d4"></div>
<div class="t rh" style="top:415px;color:#262626"><span style="display:inline-block;transform:scaleX(1.12)">11</span></div>
<div class="abs" style="left:0;top:446px;width:28px;height:1px;background:#b9b9b9"></div>
<div class="abs" style="left:29px;top:446px;width:1274px;height:1px;background:#d4d4d4"></div>
<div class="t rh" style="top:433px;color:#262626"><span style="display:inline-block;transform:scaleX(1.12)">12</span></div>
<div class="abs" style="left:0;top:464px;width:28px;height:1px;background:#b9b9b9"></div>
<div class="abs" style="left:29px;top:464px;width:1274px;height:1px;background:#d4d4d4"></div>
<div class="t rh" style="top:451px;color:#262626"><span style="display:inline-block;transform:scaleX(1.12)">13</span></div>
<div class="abs" style="left:0;top:482px;width:28px;height:1px;background:#b9b9b9"></div>
<div class="abs" style="left:29px;top:482px;width:1274px;height:1px;background:#d4d4d4"></div>
<div class="t rh" style="top:469px;color:#262626"><span style="display:inline-block;transform:scaleX(1.12)">14</span></div>
<div class="abs" style="left:0;top:500px;width:28px;height:1px;background:#b9b9b9"></div>
<div class="abs" style="left:29px;top:500px;width:1274px;height:1px;background:#d4d4d4"></div>
<div class="t rh" style="top:487px;color:#262626"><span style="display:inline-block;transform:scaleX(1.12)">15</span></div>
<div class="abs" style="left:0;top:518px;width:28px;height:1px;background:#b9b9b9"></div>
<div class="abs" style="left:29px;top:518px;width:1274px;height:1px;background:#d4d4d4"></div>
<div class="t rh" style="top:505px;color:#262626"><span style="display:inline-block;transform:scaleX(1.12)">16</span></div>
<div class="abs" style="left:0;top:536px;width:28px;height:1px;background:#b9b9b9"></div>
<div class="abs" style="left:29px;top:536px;width:1274px;height:1px;background:#d4d4d4"></div>
<div class="t rh" style="top:523px;color:#262626"><span style="display:inline-block;transform:scaleX(1.12)">17</span></div>
<div class="abs" style="left:0;top:554px;width:28px;height:1px;background:#b9b9b9"></div>
<div class="abs" style="left:29px;top:554px;width:1274px;height:1px;background:#d4d4d4"></div>
<div class="t rh" style="top:541px;color:#262626"><span style="display:inline-block;transform:scaleX(1.12)">18</span></div>
<div class="abs" style="left:0;top:572px;width:28px;height:1px;background:#b9b9b9"></div>
<div class="abs" style="left:29px;top:572px;width:1274px;height:1px;background:#d4d4d4"></div>
<div class="t rh" style="top:559px;color:#262626"><span style="display:inline-block;transform:scaleX(1.12)">19</span></div>
<div class="abs" style="left:0;top:590px;width:28px;height:1px;background:#b9b9b9"></div>
<div class="abs" style="left:29px;top:590px;width:1274px;height:1px;background:#d4d4d4"></div>
<div class="t rh" style="top:577px;color:#262626"><span style="display:inline-block;transform:scaleX(1.12)">20</span></div>
<div class="abs" style="left:0;top:608px;width:28px;height:1px;background:#b9b9b9"></div>
<div class="abs" style="left:29px;top:608px;width:1274px;height:1px;background:#d4d4d4"></div>
<div class="t rh" style="top:595px;color:#262626"><span style="display:inline-block;transform:scaleX(1.12)">21</span></div>
<div class="abs" style="left:0;top:626px;width:28px;height:1px;background:#b9b9b9"></div>
<div class="abs" style="left:29px;top:626px;width:1274px;height:1px;background:#d4d4d4"></div>
<div class="t rh" style="top:613px;color:#262626"><span style="display:inline-block;transform:scaleX(1.12)">22</span></div>
<div class="abs" style="left:113px;top:231px;width:1px;height:396px;background:#d4d4d4"></div>
<div class="abs" style="left:198px;top:231px;width:1px;height:396px;background:#d4d4d4"></div>
<div class="abs" style="left:283px;top:231px;width:1px;height:396px;background:#d4d4d4"></div>
<div class="abs" style="left:456px;top:231px;width:1px;height:396px;background:#d4d4d4"></div>
<div class="abs" style="left:573px;top:231px;width:1px;height:396px;background:#d4d4d4"></div>
<div class="abs" style="left:690px;top:231px;width:1px;height:396px;background:#d4d4d4"></div>
<div class="abs" style="left:807px;top:231px;width:1px;height:396px;background:#d4d4d4"></div>
<div class="abs" style="left:924px;top:231px;width:1px;height:396px;background:#d4d4d4"></div>
<div class="abs" style="left:1041px;top:231px;width:1px;height:396px;background:#d4d4d4"></div>
<div class="abs" style="left:1158px;top:231px;width:1px;height:396px;background:#d4d4d4"></div>
<div class="abs" style="left:1230px;top:231px;width:1px;height:396px;background:#d4d4d4"></div>
<div class="abs" style="left:1302px;top:231px;width:1px;height:396px;background:#d4d4d4"></div>
</div><div id="cells" class="abs" style="left:0;top:0;width:1303px;height:627px;overflow:hidden">
<div class="abs" style="left:29px;top:249px;width:1130px;height:18px;background:#d0cece"></div>
<div class="abs" style="left:29px;top:267px;width:255px;height:54px;background:#f8cbad"></div>
<div class="abs" style="left:284px;top:267px;width:875px;height:72px;background:#abb8a6"></div>
<div class="abs" style="left:286px;top:268px;width:170px;height:16px;background:#e2efda"></div>
<div class="abs" style="left:29px;top:248px;width:1130px;height:1px;background:#000"></div>
<div class="abs" style="left:29px;top:266px;width:255px;height:1px;background:#000"></div>
<div class="abs" style="left:283px;top:249px;width:1px;height:18px;background:#000"></div>
<div class="abs" style="left:456px;top:249px;width:1px;height:18px;background:#000"></div>
<div class="abs" style="left:29px;top:320px;width:255px;height:1px;background:#000"></div>
<div class="abs" style="left:283px;top:267px;width:1px;height:54px;background:#000"></div>
<div class="abs" style="left:113px;top:249px;width:1px;height:72px;background:repeating-linear-gradient(180deg,#000 0 1px,transparent 1px 2px)"></div>
<div class="abs" style="left:198px;top:249px;width:1px;height:72px;background:repeating-linear-gradient(180deg,#000 0 1px,transparent 1px 2px)"></div>
<div class="abs" style="left:29px;top:284px;width:254px;height:1px;background:repeating-linear-gradient(90deg,#000 0 1px,transparent 1px 2px)"></div>
<div class="abs" style="left:29px;top:302px;width:254px;height:1px;background:repeating-linear-gradient(90deg,#000 0 1px,transparent 1px 2px)"></div>
<div class="abs" style="left:286px;top:284px;width:873px;height:1px;background:repeating-linear-gradient(90deg,#000 0 1px,transparent 1px 2px)"></div>
<div class="abs" style="left:286px;top:302px;width:873px;height:1px;background:repeating-linear-gradient(90deg,#000 0 1px,transparent 1px 2px)"></div>
<div class="abs" style="left:286px;top:320px;width:873px;height:1px;background:#000"></div>
<div class="abs" style="left:456px;top:267px;width:1px;height:72px;background:#000"></div>
<div class="abs" style="left:573px;top:249px;width:1px;height:90px;background:repeating-linear-gradient(180deg,#000 0 1px,transparent 1px 2px)"></div>
<div class="abs" style="left:690px;top:249px;width:1px;height:90px;background:repeating-linear-gradient(180deg,#000 0 1px,transparent 1px 2px)"></div>
<div class="abs" style="left:283px;top:265px;width:876px;height:2px;background:#217346"></div>
<div class="abs" style="left:283px;top:338px;width:876px;height:2px;background:#217346"></div>
<div class="abs" style="left:283px;top:265px;width:2px;height:75px;background:#217346"></div>
<div class="abs" style="left:1158px;top:265px;width:2px;height:75px;background:#217346"></div>
<div class="abs" style="left:285px;top:267px;width:1px;height:71px;background:#fff"></div>
<div class="abs" style="left:285px;top:267px;width:873px;height:1px;background:#fff"></div>
<div class="abs" style="left:29px;top:231px;width:84px;height:17px;overflow:hidden"><div class="t cell" style="left:1px;top:4px;transform:scaleX(1.113);transform-origin:0 0;">WZgeev</div></div>
<div class="abs" style="left:29px;top:249px;width:84px;height:17px;overflow:hidden"><div class="t cell" style="left:1px;top:4px;transform:scaleX(1.227);transform-origin:0 0;">A</div></div>
<div class="abs" style="left:284px;top:249px;width:172px;height:17px;overflow:hidden"><div class="t cell" style="left:1px;top:4px;letter-spacing:-0.70px;">Eigenvalues</div></div>
<div class="abs" style="left:457px;top:249px;width:116px;height:17px;overflow:hidden"><div class="t cell" style="left:1px;top:4px;letter-spacing:-0.63px;">Left eigenvectors</div></div>
<div class="abs" style="left:29px;top:267px;width:84px;height:17px;overflow:hidden"><div class="t cell" style="left:1px;top:4px;transform:scaleX(1.0907);transform-origin:0 0;">0<i class="d">.</i>2−0<i class="d">.</i>11<i class="d2">i</i></div></div>
<div class="abs" style="left:114px;top:267px;width:84px;height:17px;overflow:hidden"><div class="t cell" style="left:1px;top:4px;transform:scaleX(1.0907);transform-origin:0 0;">−0<i class="d">.</i>93−0<i class="d">.</i>32<i class="d2">i</i></div></div>
<div class="abs" style="left:199px;top:267px;width:84px;height:17px;overflow:hidden"><div class="t cell" style="left:1px;top:4px;transform:scaleX(1.0907);transform-origin:0 0;">0<i class="d">.</i>81+0<i class="d">.</i>37<i class="d2">i</i></div></div>
<div class="abs" style="left:29px;top:285px;width:84px;height:17px;overflow:hidden"><div class="t cell" style="left:1px;top:4px;transform:scaleX(1.0907);transform-origin:0 0;">−0<i class="d">.</i>8−0<i class="d">.</i>92<i class="d2">i</i></div></div>
<div class="abs" style="left:114px;top:285px;width:84px;height:17px;overflow:hidden"><div class="t cell" style="left:1px;top:4px;transform:scaleX(1.0907);transform-origin:0 0;">−0<i class="d">.</i>29+0<i class="d">.</i>86<i class="d2">i</i></div></div>
<div class="abs" style="left:199px;top:285px;width:84px;height:17px;overflow:hidden"><div class="t cell" style="left:1px;top:4px;transform:scaleX(1.0907);transform-origin:0 0;">0<i class="d">.</i>64+0<i class="d">.</i>51<i class="d2">i</i></div></div>
<div class="abs" style="left:29px;top:303px;width:84px;height:17px;overflow:hidden"><div class="t cell" style="left:1px;top:4px;transform:scaleX(1.0907);transform-origin:0 0;">0<i class="d">.</i>71+0<i class="d">.</i>59<i class="d2">i</i></div></div>
<div class="abs" style="left:114px;top:303px;width:84px;height:17px;overflow:hidden"><div class="t cell" style="left:1px;top:4px;transform:scaleX(1.0907);transform-origin:0 0;">−0<i class="d">.</i>15+0<i class="d">.</i>19<i class="d2">i</i></div></div>
<div class="abs" style="left:199px;top:303px;width:84px;height:17px;overflow:hidden"><div class="t cell" style="left:1px;top:4px;transform:scaleX(1.0907);transform-origin:0 0;">0<i class="d">.</i>2+0<i class="d">.</i>94<i class="d2">i</i></div></div>
<div class="abs" style="left:284px;top:267px;width:172px;height:17px;overflow:hidden"><div class="t cell" style="left:1px;top:4px;letter-spacing:-0.00px;">C5)</div></div>
<div class="abs" style="left:284px;top:285px;width:172px;height:17px;overflow:hidden"><div class="t cell" style="left:1px;top:4px;transform:scaleX(1.0907);transform-origin:0 0;">1<i class="d">.</i>05593587167591+0<i class="d">.</i>90025</div></div>
<div class="abs" style="left:284px;top:303px;width:172px;height:17px;overflow:hidden"><div class="t cell" style="left:1px;top:4px;transform:scaleX(1.0907);transform-origin:0 0;">0<i class="d">.</i>21300535256327+1<i class="d">.</i>29634</div></div>
<div class="abs" style="left:457px;top:267px;width:116px;height:17px;overflow:hidden"><div class="t cell" style="left:1px;top:4px;transform:scaleX(1.0907);transform-origin:0 0;">0<i class="d">.</i>7267625365594</div></div>
<div class="abs" style="left:457px;top:285px;width:116px;height:17px;overflow:hidden"><div class="t cell" style="left:1px;top:4px;transform:scaleX(1.0907);transform-origin:0 0;">0<i class="d">.</i>4010137224483</div></div>
<div class="abs" style="left:457px;top:303px;width:116px;height:17px;overflow:hidden"><div class="t cell" style="left:1px;top:4px;transform:scaleX(1.0907);transform-origin:0 0;">−0<i class="d">.</i>452267225989</div></div>
<div class="abs" style="left:574px;top:267px;width:116px;height:17px;overflow:hidden"><div class="t cell" style="left:1px;top:4px;transform:scaleX(1.0907);transform-origin:0 0;">0<i class="d">.</i>7450875134777</div></div>
<div class="abs" style="left:574px;top:285px;width:116px;height:17px;overflow:hidden"><div class="t cell" style="left:1px;top:4px;transform:scaleX(1.0907);transform-origin:0 0;">−0<i class="d">.</i>548738777432</div></div>
<div class="abs" style="left:574px;top:303px;width:116px;height:17px;overflow:hidden"><div class="t cell" style="left:1px;top:4px;transform:scaleX(1.0907);transform-origin:0 0;">0<i class="d">.</i>3590682583702</div></div>
<div class="abs" style="left:691px;top:267px;width:116px;height:17px;overflow:hidden"><div class="t cell" style="left:1px;top:4px;transform:scaleX(1.0907);transform-origin:0 0;">−0<i class="d">.</i>3912316149</div></div>
<div class="abs" style="left:691px;top:285px;width:116px;height:17px;overflow:hidden"><div class="t cell" style="left:1px;top:4px;transform:scaleX(1.0907);transform-origin:0 0;">0<i class="d">.</i>67814916603</div></div>
<div class="abs" style="left:691px;top:303px;width:116px;height:17px;overflow:hidden"><div class="t cell" style="left:1px;top:4px;transform:scaleX(1.0907);transform-origin:0 0;">0<i class="d">.</i>52505472591</div></div>
<div class="abs" style="left:284px;top:321px;width:172px;height:17px;overflow:hidden"><div class="t cell" style="right:2px;top:4px;">0</div></div>
<div class="abs" style="left:457px;top:321px;width:116px;height:17px;overflow:hidden"><div class="t cell" style="right:2px;top:4px;">0</div></div>
<div class="abs" style="left:574px;top:321px;width:116px;height:17px;overflow:hidden"><div class="t cell" style="right:2px;top:4px;">0</div></div>
<div class="t cell" style="left:1259.5px;top:271px;transform:scaleX(1.09);transform-origin:0 0">070394</div>
<div class="t cell" style="left:1259.5px;top:289px;transform:scaleX(1.09);transform-origin:0 0">341378</div>
</div><div id="dialog" class="abs" style="left:778px;top:223px;width:483px;height:361px;background:#f0f0f0;border:1px solid #6b6b6b;box-shadow:0 4px 18px 2px rgba(0,0,0,.32)">
<div class="abs" style="left:0;top:0;width:481px;height:30px;background:#fff"></div>
<div class="abs" style="left:0;top:1px;width:481px;height:358px">
<div class="t" style="left:8.3px;top:8.0px;font-size:12px;color:#000;font-family:'DejaVu Sans','Noto Sans CJK JP',sans-serif;transform:scaleX(0.956);transform-origin:0 0;">関数の引数</div>
<div class="t" style="left:409.5px;top:6px;font-size:14px;color:#000;font-family:'Liberation Sans',sans-serif">?</div>
<svg class="abs" style="left:452.5px;top:8px" width="11" height="11" viewBox="0 0 11 11"><path d="M0.5 0.5L10.5 10.5M10.5 0.5L0.5 10.5" stroke="#000" stroke-width="1.1" fill="none"/></svg>
<div class="abs" style="left:6px;top:45px;width:469px;height:125px;border:1px solid #dcdcdc"></div>
<div class="t dl" style="left:10px;top:39px;background:#f0f0f0;padding:0 2px">WZgeev</div>
<div class="t dl" style="left:22px;top:66px">JobVl</div>
<div class="inp" style="top:60px"><span class="sel">"V"</span><span class="caret"></span><i><svg width="10" height="12" viewBox="0 0 10 12"><path d="M5 1V8.2M1.6 4.2L5 0.9L8.4 4.2" stroke="#000" stroke-width="1.7" fill="none"/><path d="M1 10.5H9" stroke="#000" stroke-width="1.2"/></svg></i></div>
<div class="t dl" style="left:268px;top:66.5px">=</div><div class="t dl" style="left:286px;top:66px">"V"</div>
<div class="t dl" style="left:20px;top:93px">JobVr</div>
<div class="inp" style="top:87px"><span>"V"</span><i><svg width="10" height="12" viewBox="0 0 10 12"><path d="M5 1V8.2M1.6 4.2L5 0.9L8.4 4.2" stroke="#000" stroke-width="1.7" fill="none"/><path d="M1 10.5H9" stroke="#000" stroke-width="1.2"/></svg></i></div>
<div class="t dl" style="left:268px;top:93.5px">=</div><div class="t dl" style="left:286px;top:93px">"V"</div>
<div class="t dl" style="left:44px;top:120px">N</div>
<div class="inp" style="top:114px"><span>3</span><i><svg width="10" height="12" viewBox="0 0 10 12"><path d="M5 1V8.2M1.6 4.2L5 0.9L8.4 4.2" stroke="#000" stroke-width="1.7" fill="none"/><path d="M1 10.5H9" stroke="#000" stroke-width="1.2"/></svg></i></div>
<div class="t dl" style="left:268px;top:120.5px">=</div><div class="t dl" style="left:286px;top:120px">3</div>
<div class="t dl" style="left:45px;top:147px">A</div>
<div class="inp" style="top:141px"><span>A3:C5</span><i><svg width="10" height="12" viewBox="0 0 10 12"><path d="M5 1V8.2M1.6 4.2L5 0.9L8.4 4.2" stroke="#000" stroke-width="1.7" fill="none"/><path d="M1 10.5H9" stroke="#000" stroke-width="1.2"/></svg></i></div>
<div class="t dl" style="left:268px;top:147.5px">=</div><div class="t dl" style="left:286px;top:147px">{"0.2-0.11i","-0.93-0.32i","0....</div>
<div class="t dl" style="left:268px;top:178.5px">=</div><div class="t dl" style="left:286px;top:178px">{"-1.15894122423918-0.506...</div>
<div class="t" style="left:6.8px;top:197.5px;font-size:12px;color:#000;font-family:'DejaVu Sans','Noto Sans CJK JP',sans-serif;transform:scaleX(0.969);transform-origin:0 0;">固有値</div>
<div class="t" style="left:41.5px;top:197.5px;font-size:12px;color:#000;font-family:'DejaVu Sans','Noto Sans CJK JP',sans-serif;transform:scaleX(0.499);transform-origin:0 0;">・</div>
<div class="t" style="left:48.4px;top:197.5px;font-size:12px;color:#000;font-family:'DejaVu Sans','Noto Sans CJK JP',sans-serif;transform:scaleX(0.929);transform-origin:0 0;">固有</div>
<div class="t" style="left:72.4px;top:197.5px;font-size:12px;color:#000;font-family:'DejaVu Sans','Noto Sans CJK JP',sans-serif;transform:scaleX(0.741);transform-origin:0 0;">ベクトル</div>
<div class="t" style="left:113.0px;top:198.0px;font-size:11.3px;color:#000;font-family:'DejaVu Sans','Noto Sans CJK JP',sans-serif;transform:scaleX(0.792);transform-origin:0 0;">(</div>
<div class="t" style="left:117.0px;top:197.5px;font-size:12px;color:#000;font-family:'DejaVu Sans','Noto Sans CJK JP',sans-serif;transform:scaleX(1.000);transform-origin:0 0;">複素行列</div>
<div class="t" style="left:165.8px;top:198.0px;font-size:11.3px;color:#000;font-family:'DejaVu Sans','Noto Sans CJK JP',sans-serif;transform:scaleX(0.792);transform-origin:0 0;">)</div>
<div class="t" style="left:174.8px;top:198.0px;font-size:11.3px;color:#000;font-family:'DejaVu Sans','Noto Sans CJK JP',sans-serif;transform:scaleX(1.005);transform-origin:0 0;">(Excel</div>
<div class="t" style="left:210.0px;top:197.5px;font-size:12px;color:#000;font-family:'DejaVu Sans','Noto Sans CJK JP',sans-serif;transform:scaleX(1.000);transform-origin:0 0;">複素数形式</div>
<div class="t" style="left:270.5px;top:198.0px;font-size:11.3px;color:#000;font-family:'DejaVu Sans','Noto Sans CJK JP',sans-serif;transform:scaleX(0.792);transform-origin:0 0;">)</div>
<div class="t" style="left:174.0px;top:225.5px;font-size:11.3px;color:#000;font-family:'DejaVu Sans','Noto Sans CJK JP',sans-serif;transform:scaleX(1.043);transform-origin:0 0;">JobVl</div>
<div class="t" style="left:213.5px;top:225.5px;font-size:11.3px;color:#000;font-family:'DejaVu Sans','Noto Sans CJK JP',sans-serif;transform:scaleX(0.787);transform-origin:0 0;">:</div>
<div class="t" style="left:221.9px;top:225.0px;font-size:12px;color:#000;font-family:'DejaVu Sans','Noto Sans CJK JP',sans-serif;transform:scaleX(0.969);transform-origin:0 0;">左固有</div>
<div class="t" style="left:257.8px;top:225.0px;font-size:12px;color:#000;font-family:'DejaVu Sans','Noto Sans CJK JP',sans-serif;transform:scaleX(0.706);transform-origin:0 0;">ベクトル</div>
<div class="t" style="left:292.7px;top:225.0px;font-size:12px;color:#000;font-family:'DejaVu Sans','Noto Sans CJK JP',sans-serif;transform:scaleX(0.998);transform-origin:0 0;">計算指定</div>
<div class="t" style="left:346.2px;top:225.5px;font-size:11.3px;color:#000;font-family:'DejaVu Sans','Noto Sans CJK JP',sans-serif;transform:scaleX(1.034);transform-origin:0 0;">(N</div>
<div class="t" style="left:364.1px;top:225.0px;font-size:12px;color:#000;font-family:'DejaVu Sans','Noto Sans CJK JP',sans-serif;transform:scaleX(0.733);transform-origin:0 0;">または</div>
<div class="t" style="left:396.5px;top:225.5px;font-size:11.3px;color:#000;font-family:'DejaVu Sans','Noto Sans CJK JP',sans-serif;transform:scaleX(0.980);transform-origin:0 0;">V)</div>
<div class="abs" style="left:6px;top:281px;width:470px;height:1px;background:#dcdcdc"></div>
<div class="t" style="left:5.9px;top:298.3px;font-size:12px;color:#000;font-family:'DejaVu Sans','Noto Sans CJK JP',sans-serif;transform:scaleX(0.960);transform-origin:0 0;">数式の結果</div>
<div class="t" style="left:69.3px;top:299.3px;font-size:11.3px;color:#000;font-family:'DejaVu Sans','Noto Sans CJK JP',sans-serif;transform:scaleX(0.771);transform-origin:0 0;">=</div>
<div class="t" style="left:87.4px;top:298.8px;font-size:11.3px;color:#000;font-family:'DejaVu Sans','Noto Sans CJK JP',sans-serif;transform:scaleX(0.985);transform-origin:0 0;">-1.15894122423918-0.50662892448174i</div>
<div class="t" style="left:5.9px;top:331.5px;font-size:12px;color:#0066cc;font-family:'DejaVu Sans','Noto Sans CJK JP',sans-serif;transform:scaleX(0.863);transform-origin:0 0;">この関数の</div>
<div class="t" style="left:58.3px;top:331.5px;font-size:12px;color:#0066cc;font-family:'DejaVu Sans','Noto Sans CJK JP',sans-serif;transform:scaleX(0.808);transform-origin:0 0;">ヘルプ</div>
<div class="t" style="left:88.4px;top:332.0px;font-size:11.3px;color:#0066cc;font-family:'DejaVu Sans','Noto Sans CJK JP',sans-serif;transform:scaleX(0.994);transform-origin:0 0;">(H)</div>
<div class="abs" style="left:5.9px;top:342.5px;width:100px;height:1px;background:#0066cc"></div>
<div class="abs btn" style="left:316px;top:324px;border:2px solid #0078d7"></div>
<div class="abs btn" style="left:400px;top:324px;border:1px solid #adadad"></div>
<div class="t" style="left:344.0px;top:331.6px;font-size:11.3px;color:#000;font-family:'DejaVu Sans','Noto Sans CJK JP',sans-serif;transform:scaleX(1.054);transform-origin:0 0;">OK</div>
<div class="t" style="left:412.5px;top:330.5px;font-size:12px;color:#000;font-family:'DejaVu Sans','Noto Sans CJK JP',sans-serif;transform:scaleX(0.791);transform-origin:0 0;">キャンセル</div>
</div></div></body>
</html>
